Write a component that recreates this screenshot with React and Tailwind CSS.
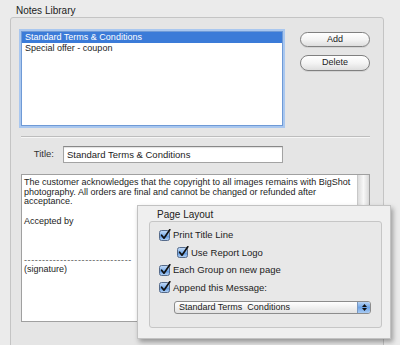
import React from 'react';

const Check = () => (
  <svg width="12" height="12" viewBox="0 0 12 12" className="shrink-0">
    <defs>
      <linearGradient id="cbg" x1="0" y1="0" x2="0" y2="1">
        <stop offset="0" stopColor="#c6dcf7" />
        <stop offset="0.5" stopColor="#7fb0ea" />
        <stop offset="0.55" stopColor="#5d97e0" />
        <stop offset="1" stopColor="#b8d5f6" />
      </linearGradient>
    </defs>
    <rect x="0.5" y="1.5" width="10" height="10" rx="2" fill="url(#cbg)" stroke="#566b8a" />
    <path d="M2.6 6.2 L5 9.2 L10.8 0.8" fill="none" stroke="#111" strokeWidth="1.7" strokeLinecap="round" strokeLinejoin="round" />
  </svg>
);

const CheckRow = ({ label, indent }) => (
  <div className={`flex items-center h-[17.5px] gap-[2px] ${indent ? 'pl-[27px]' : 'pl-[9px]'}`}>
    <Check />
    <span className="text-[9.5px] leading-[11px]">{label}</span>
  </div>
);

const AquaButton = ({ children, h }) => (
  <div
    className={`w-[70px] ${h} rounded-full border border-[#808080] bg-gradient-to-b from-white via-[#f4f4f4] to-[#dedede] flex items-center justify-center text-[9px] text-[#222] shadow-[0_1px_0_rgba(0,0,0,0.08)]`}
  >
    {children}
  </div>
);

export default function App() {
  const body = [
    'The customer acknowledges that the copyright to all images remains with BigShot',
    'photography. All orders are final and cannot be changed or refunded after',
    'acceptance.',
    '\u00a0',
    'Accepted by',
    '\u00a0',
    '\u00a0',
    '\u00a0',
  ];

  return (
    <div className="relative w-[400px] h-[345px] overflow-hidden bg-[#ebebeb] text-[#1c1c1c] font-['Liberation_Sans',Arial,sans-serif]">
      <div className="pl-[16px] pt-[5px] text-[10px] leading-[12px] text-[#222]">Notes Library</div>

      <div className="ml-[10px] w-[374px] h-[340px] rounded-[3px] border border-[#c4c4c4] bg-[#e5e5e5] pl-[10px] pt-[13px]">
        <div className="flex">
          <div className="w-[262px] h-[95px] border border-[#6f9ad6] bg-white shadow-[0_0_0_2px_#a9c7ef]">
            <div className="h-[11px] bg-[#3b7bd8] text-white text-[9px] leading-[11px] pl-[3px]">
              Standard Terms &amp; Conditions
            </div>
            <div className="h-[11px] text-[9px] leading-[11px] pl-[3px]">Special offer - coupon</div>
          </div>
          <div className="ml-[17px] mt-[1px] flex flex-col gap-[8px]">
            <AquaButton h="h-[15px]">Add</AquaButton>
            <AquaButton h="h-[16px]">Delete</AquaButton>
          </div>
        </div>

        <div className="mt-[10px] w-[349px] h-[2px] border-t border-[#bdbdbd] border-b border-b-[#f6f6f6]" />

        <div className="mt-[8px] flex items-center">
          <div className="w-[33px] text-right text-[9.5px] text-[#333]">Title:</div>
          <div className="ml-[9px] w-[220px] h-[17px] border border-[#a3a3a3] border-t-[#888] bg-white pl-[3px] text-[9.5px] leading-[15px] shadow-[inset_0_1px_1px_rgba(0,0,0,0.12)]">
            Standard Terms &amp; Conditions
          </div>
        </div>

        <div className="mt-[11px] w-[349px] h-[148px] border border-[#a0a0a0] bg-white flex">
          <div className="flex-1 pl-[2px] pt-[3px] text-[9px] leading-[9.7px] whitespace-nowrap overflow-hidden">
            {body.map((l, i) => (
              <div key={i}>{l}</div>
            ))}
            <div className="tracking-[0.6px] text-[#555]">------------------------------</div>
            <div>(signature)</div>
          </div>
          <div className="w-[12px] h-full border-l border-[#c8c8c8] bg-gradient-to-r from-[#dcdcdc] via-[#f8f8f8] to-[#d9d9d9]" />
        </div>
      </div>

      <div className="absolute left-[137px] top-[205px] w-[254px] h-[134px] bg-[#efefef] border border-[#c2c2c2] shadow-[2px_3px_5px_rgba(0,0,0,0.35)] pl-[11px] pt-[3px]">
        <div className="pl-[8px] text-[10px] leading-[12px] text-[#222]">Page Layout</div>
        <div className="w-[233px] h-[107px] rounded-[3px] border border-[#c6c6c6] bg-[#e8e8e8] pt-[4px]">
          <CheckRow label="Print Title Line" />
          <CheckRow label="Use Report Logo" indent />
          <CheckRow label="Each Group on new page" />
          <CheckRow label="Append this Message:" />
          <div className="ml-[24px] mt-[5px] w-[197px] h-[13px] rounded-[3px] border border-[#8c8c8c] bg-gradient-to-b from-white to-[#e2e2e2] flex overflow-hidden">
            <div className="flex-1 pl-[4px] text-[9px] leading-[11px] text-[#222]">Standard Terms&nbsp; Conditions</div>
            <div className="w-[13px] h-full bg-gradient-to-b from-[#b9d4f4] via-[#6ea4e6] to-[#a9cbf3] border-l border-[#7a98c0] flex flex-col items-center justify-center gap-[1px]">
              <svg width="5" height="3" viewBox="0 0 5 3"><path d="M0 3 L2.5 0 L5 3 Z" fill="#111" /></svg>
              <svg width="5" height="3" viewBox="0 0 5 3"><path d="M0 0 L2.5 3 L5 0 Z" fill="#111" /></svg>
            </div>
          </div>
        </div>
      </div>
    </div>
  );
}
